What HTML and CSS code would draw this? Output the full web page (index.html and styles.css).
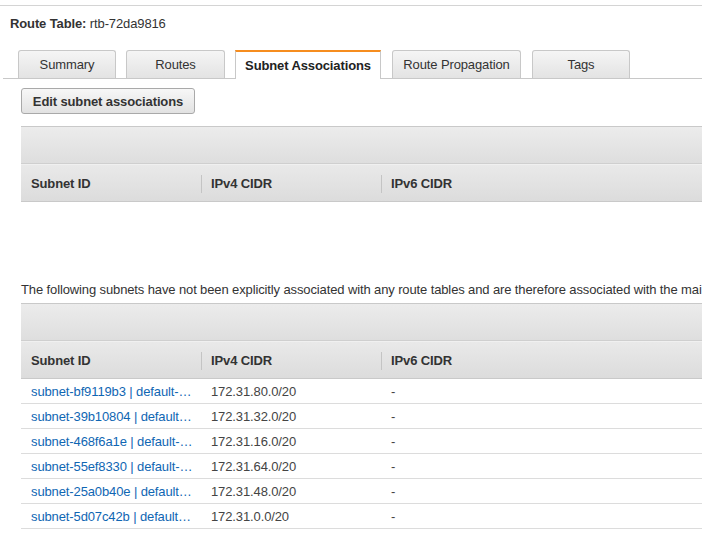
FILE: index.html
```html
<!DOCTYPE html>
<html lang="en">
<head>
<meta charset="utf-8">
<title>Route Table rtb-72da9816</title>
<link rel="stylesheet" href="styles.css">
</head>
<body>
<div class="page">
  <div class="header-rule"></div>
  <h1 class="title"><b>Route Table:</b> rtb-72da9816</h1>
  <nav class="tabs">
    <span class="tab">Summary</span>
    <span class="tab tab-routes">Routes</span>
    <span class="tab tab-active">Subnet Associations</span>
    <span class="tab tab-prop">Route Propagation</span>
    <span class="tab">Tags</span>
  </nav>
  <div class="content">
    <button class="btn" type="button">Edit subnet associations</button>
    <table class="grid grid-first">
      <colgroup><col class="c1"><col class="c2"><col class="c3"></colgroup>
      <thead>
        <tr><td class="band" colspan="3"></td></tr>
        <tr><th>Subnet ID</th><th class="sep">IPv4 CIDR</th><th class="sep">IPv6 CIDR</th></tr>
      </thead>
    </table>
    <p class="note">The following subnets have not been explicitly associated with any route tables and are therefore associated with the main route table:</p>
    <table class="grid">
      <colgroup><col class="c1"><col class="c2"><col class="c3"></colgroup>
      <thead>
        <tr><td class="band" colspan="3"></td></tr>
        <tr><th>Subnet ID</th><th class="sep">IPv4 CIDR</th><th class="sep">IPv6 CIDR</th></tr>
      </thead>
      <tbody>
        <tr><td><a href="#">subnet-bf9119b3 | default-…</a></td><td>172.31.80.0/20</td><td>-</td></tr>
        <tr><td><a href="#">subnet-39b10804 | default…</a></td><td>172.31.32.0/20</td><td>-</td></tr>
        <tr><td><a href="#">subnet-468f6a1e | default-…</a></td><td>172.31.16.0/20</td><td>-</td></tr>
        <tr><td><a href="#">subnet-55ef8330 | default-…</a></td><td>172.31.64.0/20</td><td>-</td></tr>
        <tr><td><a href="#">subnet-25a0b40e | default…</a></td><td>172.31.48.0/20</td><td>-</td></tr>
        <tr><td><a href="#">subnet-5d07c42b | default…</a></td><td>172.31.0.0/20</td><td>-</td></tr>
      </tbody>
    </table>
  </div>
</div>
</body>
</html>
```

FILE: styles.css
```css
html, body {
  margin: 0;
  padding: 0;
  background: #fff;
}
body {
  font-family: "Liberation Sans", Arial, Helvetica, sans-serif;
  font-size: 13px;
  letter-spacing: -0.12px;
  color: #333;
  overflow: hidden;
}
.page {
  width: 702px;
}
.header-rule {
  margin-top: 5px;
  border-top: 1px solid #d4d4d4;
}
.title {
  margin: 10px 0 0 10px;
  font-size: 13px;
  line-height: 16px;
  font-weight: normal;
  color: #333;
}
.title b {
  font-weight: bold;
}
.tabs {
  display: flex;
  align-items: flex-end;
  gap: 10px;
  margin: 18px 0 0 3px;
  padding-left: 15px;
  border-bottom: 1px solid #c8c8c8;
}
.tab {
  box-sizing: border-box;
  width: 98px;
  height: 28px;
  line-height: 27px;
  text-align: center;
  border: 1px solid #c8c8c8;
  border-bottom: none;
  border-radius: 3px 3px 0 0;
  background: linear-gradient(#f5f5f5, #e3e3e3);
  color: #333;
  white-space: nowrap;
}
.tab-routes {
  width: 99px;
}
.tab-prop {
  width: 129px;
  margin-left: 1px;
}
.tab-prop + .tab {
  margin-left: 1px;
}
.tab-active {
  width: 146px;
  height: 29px;
  line-height: 27px;
  margin-bottom: -1px;
  border-top: 2px solid #f68d1f;
  border-radius: 0;
  background: #fff;
  font-weight: bold;
  color: #222;
}
.content {
  padding-left: 21px;
}
.btn {
  display: block;
  box-sizing: border-box;
  width: 174px;
  height: 26px;
  margin-top: 9px;
  padding: 0;
  font-family: inherit;
  font-size: 13px;
  letter-spacing: inherit;
  font-weight: bold;
  color: #333;
  border: 1px solid #a9a9a9;
  border-radius: 3px;
  background: linear-gradient(#f7f7f7, #e2e2e2);
}
.grid {
  width: 700px;
  margin-top: 12px;
  border-spacing: 0;
  border-collapse: separate;
  table-layout: fixed;
}
.c1, .c2 {
  width: 180px;
}
.grid th {
  position: relative;
  height: 36px;
  padding: 0 10px;
  text-align: left;
  font-weight: bold;
  color: #333;
  border-top: 1px solid #f0f0f0;
  border-bottom: 1px solid #c9c9c9;
  background: linear-gradient(#e9e9e9, #dcdcdc);
  white-space: nowrap;
}
.grid th.sep::before {
  content: "";
  position: absolute;
  left: 0;
  top: 10px;
  bottom: 8px;
  width: 1px;
  background: #c4c4c4;
}
.grid td {
  height: 24px;
  padding: 0 10px;
  border-bottom: 1px solid #dcdcdc;
  color: #444;
  white-space: nowrap;
  overflow: hidden;
}
.grid td.band {
  height: 36px;
  padding: 0;
  border-top: 1px solid #c9c9c9;
  border-bottom: 1px solid #cfcfcf;
  background: linear-gradient(#ececec, #dedede);
}
.grid a {
  color: #0f66b3;
  text-decoration: none;
}
.note {
  margin: 80px 0 0 0;
  line-height: 16px;
  color: #333;
  white-space: nowrap;
}
.note + .grid {
  margin-top: 5px;
}
```
